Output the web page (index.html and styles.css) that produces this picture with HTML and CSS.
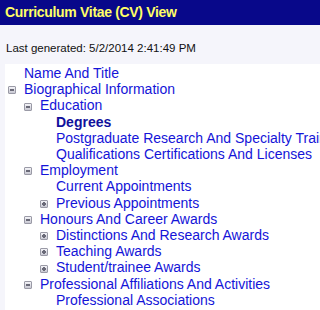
FILE: index.html
```html
<!DOCTYPE html>
<html>
<head>
<meta charset="utf-8">
<link rel="stylesheet" href="styles.css">
</head>
<body>
<div class="header">Curriculum Vitae (CV) View</div>
<div class="generated">Last generated: 5/2/2014 2:41:49 PM</div>
<div class="tree">
  <ul class="level">
    <li><div class="row"><span class="slot"></span><a class="node">Name And Title</a></div></li>
    <li><div class="row"><span class="slot"><span class="tg minus"></span></span><a class="node">Biographical Information</a></div>
      <ul class="level sub">
        <li><div class="row"><span class="slot"><span class="tg minus"></span></span><a class="node">Education</a></div>
          <ul class="level sub">
            <li><div class="row"><span class="slot"></span><a class="node current">Degrees</a></div></li>
            <li><div class="row"><span class="slot"></span><a class="node">Postgraduate Research And Specialty Training</a></div></li>
            <li><div class="row"><span class="slot"></span><a class="node">Qualifications Certifications And Licenses</a></div></li>
          </ul>
        </li>
        <li><div class="row"><span class="slot"><span class="tg minus"></span></span><a class="node">Employment</a></div>
          <ul class="level sub">
            <li><div class="row"><span class="slot"></span><a class="node">Current Appointments</a></div></li>
            <li><div class="row"><span class="slot"><span class="tg plus"></span></span><a class="node">Previous Appointments</a></div></li>
          </ul>
        </li>
        <li><div class="row"><span class="slot"><span class="tg minus"></span></span><a class="node">Honours And Career Awards</a></div>
          <ul class="level sub">
            <li><div class="row"><span class="slot"><span class="tg plus"></span></span><a class="node">Distinctions And Research Awards</a></div></li>
            <li><div class="row"><span class="slot"><span class="tg plus"></span></span><a class="node">Teaching Awards</a></div></li>
            <li><div class="row"><span class="slot"><span class="tg plus"></span></span><a class="node">Student/trainee Awards</a></div></li>
          </ul>
        </li>
        <li><div class="row"><span class="slot"><span class="tg minus"></span></span><a class="node">Professional Affiliations And Activities</a></div>
          <ul class="level sub">
            <li><div class="row"><span class="slot"></span><a class="node">Professional Associations</a></div></li>
          </ul>
        </li>
      </ul>
    </li>
  </ul>
</div>
</body>
</html>
```
FILE: styles.css
```css
html {
  background: #f5f5fb;
  overflow: hidden;
}
html, body {
  margin: 0;
  padding: 0;
}
body {
  font-family: "Liberation Sans", Arial, sans-serif;
  height: 100vh;
  display: flex;
  flex-direction: column;
  overflow: hidden;
}
.header {
  flex: none;
  background: #08088a;
  color: #ffff66;
  font-weight: bold;
  font-size: 14px;
  height: 25px;
  line-height: 24px;
  padding-left: 5px;
  letter-spacing: -0.32px;
  white-space: nowrap;
}
.generated {
  flex: none;
  font-size: 11.5px;
  color: #111;
  padding: 17px 0 0 6px;
  height: 22px;
  line-height: 13px;
  white-space: nowrap;
}
.tree {
  flex: 1;
  min-height: 0;
  background: #ffffff;
  margin-left: 5px;
  padding: 1px 0 0 3px;
  white-space: nowrap;
  overflow: hidden;
}
.level {
  list-style: none;
  margin: 0;
  padding: 0;
}
.sub {
  padding-left: 16px;
}
.row {
  display: flex;
  align-items: center;
  font-size: 14px;
  line-height: 16.2px;
}
.slot {
  width: 16px;
  flex: none;
  display: flex;
  align-items: center;
  padding-top: 2px;
}
.node {
  color: #1414d8;
  text-decoration: none;
}
.node.current {
  font-weight: bold;
  color: #10109c;
}
.tg {
  position: relative;
  display: block;
  width: 6px;
  height: 6px;
  border: 1px solid #9a9aa6;
  border-radius: 1px;
  background: linear-gradient(#f4f4f8, #c8c8d2);
}
.tg::before {
  content: "";
  position: absolute;
  left: 1px;
  top: 2px;
  width: 4px;
  height: 2px;
  background: #6a6a78;
}
.tg.plus::after {
  content: "";
  position: absolute;
  left: 2px;
  top: 1px;
  width: 2px;
  height: 4px;
  background: #6a6a78;
}
```
